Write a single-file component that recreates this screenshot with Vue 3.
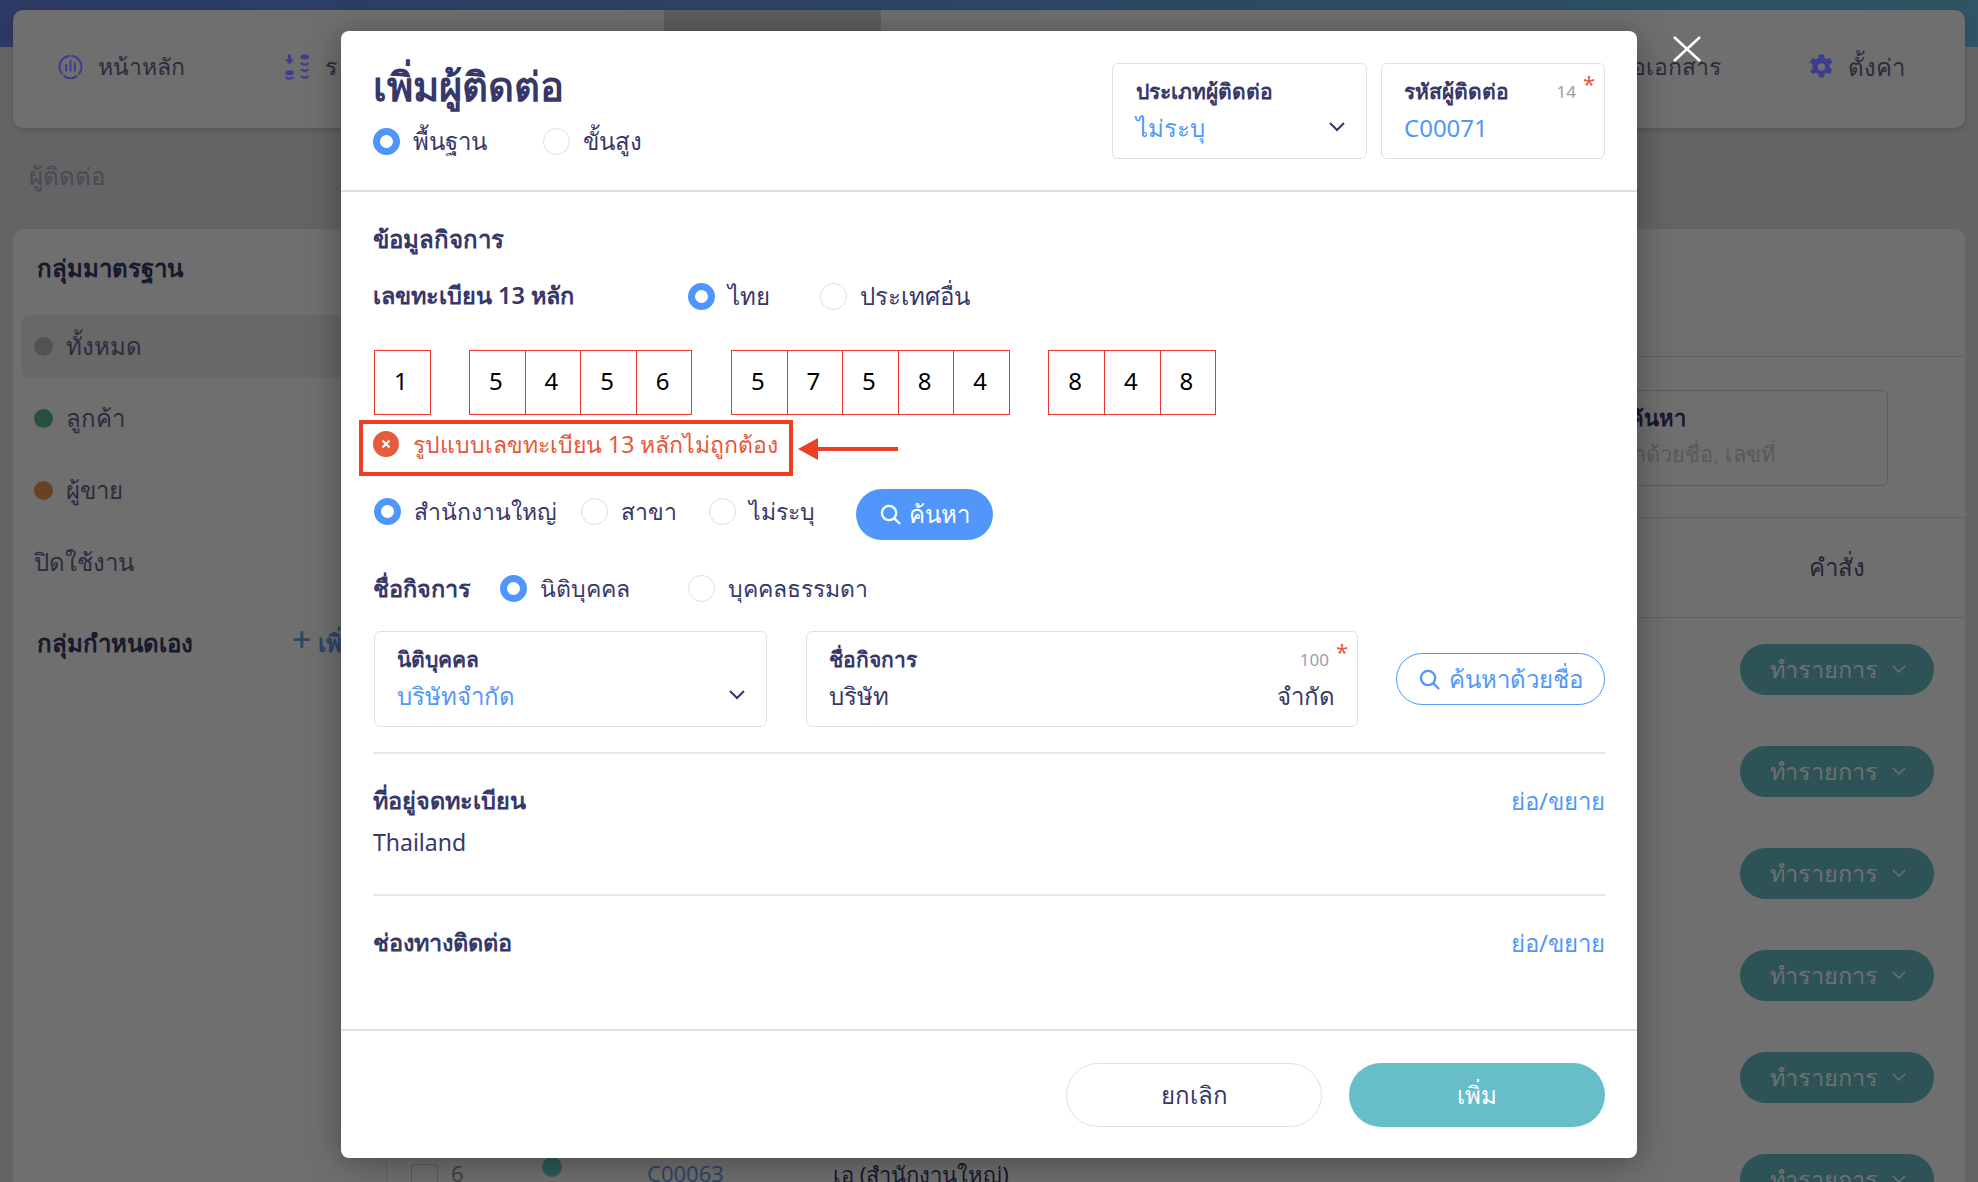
<script setup>
const navRight = 'ขอเอกสาร'

const sideItems = [
  { label: 'ทั้งหมด', color: '#bdbdbd', active: true },
  { label: 'ลูกค้า', color: '#5dbb8a' },
  { label: 'ผู้ขาย', color: '#ef9a4f' }
]

const taxGroups = [['1'], ['5', '4', '5', '6'], ['5', '7', '5', '8', '4'], ['8', '4', '8']]

const actionRows = [1, 2, 3, 4, 5, 6]

const branchOptions = [
  { label: 'สำนักงานใหญ่', checked: true, width: 207 },
  { label: 'สาขา', width: 128 },
  { label: 'ไม่ระบุ', width: 147 }
]
</script>

<template>
  <div class="page">
    <!-- page behind the dialog -->
    <div class="topband"></div>
    <div class="backdrop">
      <nav class="nav">
        <div class="nav-item first">
          <svg class="nav-icon" viewBox="0 0 26 26" fill="none" stroke="#3b3d8f" stroke-width="2" stroke-linecap="round">
            <path d="M11.500 1.600A11.500 11.500 0 0 0 4 20" />
            <path d="M14.500 1.600A11.500 11.500 0 0 1 22 20" />
            <path d="M6.500 22.500a11 11 0 0 0 13 0" />
            <path d="M8.500 11v6M13 6.500V17M17.500 9v8" />
          </svg>
          <span>หน้าหลัก</span>
        </div>
        <div class="nav-item second">
          <svg class="nav-icon" viewBox="0 0 26 26">
            <path fill="#3b3d8f" d="M3.200 0h3v5h3L4.700 10.500 0 5h3.200z" />
            <ellipse cx="4.700" cy="19" rx="4.500" ry="2.600" fill="#3b3d8f" />
            <ellipse cx="20.500" cy="2.600" rx="4.500" ry="2.600" fill="#3b3d8f" />
            <path d="M0.800 23.500q3.900 3 7.800 0M16.500 9q4 3 8 0M16.500 15.500q4 3 8 0M16.500 22.500q4 3 8 0" fill="none" stroke="#3b3d8f" stroke-width="2.300" />
          </svg>
          <span>ร</span>
        </div>
        <div class="nav-tab"></div>
        <div class="nav-spacer"></div>
        <div class="nav-item doc"><span>{{ navRight }}</span></div>
        <div class="nav-item setting">
          <svg class="nav-icon gear" viewBox="0 0 24 26">
            <path fill="#3b3d8f" fill-rule="evenodd" d="M9.500 0h5l.7 3.700 2.100 1.200 3.500-1.200 2.500 4.300-2.800 2.500v2.900l2.800 2.500-2.500 4.300-3.500-1.200-2.100 1.200-.7 3.800h-5l-.7-3.800-2.100-1.200-3.500 1.200L-.1 17.900l2.800-2.500v-4.800L-.1 8l2.500-4.300 3.500 1.200 2.900-1.200zM12 9a4 4 0 1 0 0 8 4 4 0 0 0 0-8z" />
          </svg>
          <span>ตั้งค่า</span>
        </div>
      </nav>

      <div class="crumb">ผู้ติดต่อ</div>

      <section class="content">
        <aside class="side">
          <h3 class="side-title">กลุ่มมาตรฐาน</h3>
          <div v-for="item in sideItems" :key="item.label" class="side-item" :class="{ active: item.active }">
            <i class="dot" :style="{ background: item.color }"></i>{{ item.label }}
          </div>
          <div class="side-item off">ปิดใช้งาน</div>
          <div class="side-own">
            <h3 class="side-title">กลุ่มกำหนดเอง</h3>
            <span class="side-add"><b>+</b> เพิ่ม</span>
          </div>
        </aside>

        <div class="main">
          <div class="main-top"></div>
          <div class="filter">
            <div class="search-box">
              <b>ค้นหา</b>
              <span>ค้นหาด้วยชื่อ, เลขที่</span>
            </div>
          </div>
          <div class="thead"><span>คำสั่ง</span></div>
          <div v-for="row in actionRows" :key="row" class="trow">
            <template v-if="row === 6">
              <i class="check"></i>
              <span class="num">6</span>
              <i class="row-dot"></i>
              <span class="code">C00063</span>
              <span class="cname">เอ (สำนักงานใหญ่)</span>
            </template>
            <button class="action">
              ทำรายการ
              <svg viewBox="0 0 14 8" fill="none" stroke="#fff" stroke-width="1.500"><path d="M1 1l6 6 6-6" /></svg>
            </button>
          </div>
        </div>
      </section>
    </div>

    <!-- dialog -->
    <div class="overlay">
      <svg class="close" viewBox="0 0 28 26" fill="none" stroke="#fff" stroke-width="2.600"><path d="M1 1l26 24M27 1L1 25" /></svg>

      <div class="modal">
        <header class="m-head">
          <div class="m-title-wrap">
            <h1 class="m-title">เพิ่มผู้ติดต่อ</h1>
            <div class="radios head-radios">
              <label class="radio w170 big"><i class="ring on"></i>พื้นฐาน</label>
              <label class="radio big"><i class="ring"></i>ขั้นสูง</label>
            </div>
          </div>
          <div class="field type-field">
            <div class="f-label">ประเภทผู้ติดต่อ</div>
            <div class="f-value blue">ไม่ระบุ</div>
            <svg class="chev" viewBox="0 0 16 10" fill="none" stroke="#37386a" stroke-width="2"><path d="M1 1l7 7 7-7" /></svg>
          </div>
          <div class="field code-field">
            <div class="f-label">รหัสผู้ติดต่อ</div>
            <div class="f-value blue">C00071</div>
            <span class="count">14</span>
            <span class="star">*</span>
          </div>
        </header>

        <div class="m-body">
          <h2 class="sec-title">ข้อมูลกิจการ</h2>

          <div class="tax-head">
            <h3 class="label-bold">เลขทะเบียน 13 หลัก</h3>
            <div class="radios">
              <label class="radio w132 big"><i class="ring on"></i>ไทย</label>
              <label class="radio big"><i class="ring"></i>ประเทศอื่น</label>
            </div>
          </div>

          <div class="tax-boxes">
            <div v-for="(group, g) in taxGroups" :key="g" class="tax-group">
              <div v-for="(digit, d) in group" :key="d" class="tax-cell">{{ digit }}</div>
            </div>
          </div>

          <div class="error">
            <svg class="err-icon" viewBox="0 0 26 26"><circle cx="13" cy="13" r="13" fill="#e45c3c" /><path d="M9.500 9.500l7 7M16.500 9.500l-7 7" stroke="#fff" stroke-width="2.200" /></svg>
            <span class="err-text">รูปแบบเลขทะเบียน 13 หลักไม่ถูกต้อง</span>
            <div class="err-frame"></div>
            <svg class="err-arrow" viewBox="0 0 100 22" fill="#ee3f23"><path d="M0 11L20 0v9h80v4H20v9z" /></svg>
          </div>

          <div class="branch-row">
            <label v-for="opt in branchOptions" :key="opt.label" class="radio" :style="{ width: opt.width + 'px' }">
              <i class="ring" :class="{ on: opt.checked }"></i>{{ opt.label }}
            </label>
            <button class="search-btn">
              <svg viewBox="0 0 22 22" fill="none" stroke="#fff" stroke-width="2.400"><circle cx="9.500" cy="9.500" r="7.500" /><path d="M15 15l6 6" /></svg>
              ค้นหา
            </button>
          </div>

          <div class="name-head">
            <h3 class="label-bold">ชื่อกิจการ</h3>
            <label class="radio w188"><i class="ring on"></i>นิติบุคคล</label>
            <label class="radio"><i class="ring"></i>บุคคลธรรมดา</label>
          </div>

          <div class="name-row">
            <div class="field legal-field">
              <div class="f-label">นิติบุคคล</div>
              <div class="f-value blue">บริษัทจำกัด</div>
              <svg class="chev" viewBox="0 0 16 10" fill="none" stroke="#37386a" stroke-width="2"><path d="M1 1l7 7 7-7" /></svg>
            </div>
            <div class="field name-field">
              <div class="f-label">ชื่อกิจการ</div>
              <div class="f-value split"><span>บริษัท</span><span>จำกัด</span></div>
              <span class="count">100</span>
              <span class="star">*</span>
            </div>
            <button class="name-search">
              <svg viewBox="0 0 22 22" fill="none" stroke="#5197fb" stroke-width="2.400"><circle cx="9.500" cy="9.500" r="7.500" /><path d="M15 15l6 6" /></svg>
              ค้นหาด้วยชื่อ
            </button>
          </div>

          <div class="block address">
            <div class="block-head">
              <h3 class="label-bold">ที่อยู่จดทะเบียน</h3>
              <a class="toggle">ย่อ/ขยาย</a>
            </div>
            <div class="block-text">Thailand</div>
          </div>

          <div class="block contact">
            <div class="block-head">
              <h3 class="label-bold">ช่องทางติดต่อ</h3>
              <a class="toggle">ย่อ/ขยาย</a>
            </div>
          </div>
        </div>

        <footer class="m-foot">
          <button class="btn ghost">ยกเลิก</button>
          <button class="btn primary">เพิ่ม</button>
        </footer>
      </div>
    </div>
  </div>
</template>

<style>
html, body { margin: 0; padding: 0; overflow: hidden; }
</style>

<style scoped>
* { box-sizing: border-box; }

.page {
  position: relative;
  width: 1978px;
  height: 1182px;
  overflow: hidden;
  background: #e6e6e6;
  font-family: "Noto Sans", Inter, "DejaVu Sans", sans-serif;
  color: #37386a;
}

.topband {
  height: 47px;
  background: linear-gradient(90deg, #6984e8, #6bc3e3);
}

.backdrop {
  margin-top: -37px;
  padding: 0 13px;
}

.nav {
  display: flex;
  align-items: flex-start;
  height: 118px;
  background: #fff;
  border-radius: 10px;
  box-shadow: 0 2px 6px rgba(0, 0, 0, .15);
  color: #666690;
  font-size: 23px;
}

.nav-item {
  display: flex;
  align-items: center;
  gap: 15px;
  height: 114px;
}

.nav-item.first { margin-left: 45px; width: 227px; }
.nav-item.second { width: 379px; }
.nav-tab { width: 217px; height: 118px; background: #dadada; }
.nav-spacer { flex: 1; }
.nav-item.setting { margin-left: 89px; margin-right: 60px; font-size: 24px; }

/* nav icons stay saturated above the dim layer */
.nav-icon { position: relative; z-index: 1; width: 25px; height: 26px; }
.gear { width: 23px; }

.crumb {
  margin: 29px 0 0 16px;
  height: 72px;
  font-size: 24px;
  color: #a9a9c4;
}

.content {
  display: flex;
  height: 960px;
  background: #fff;
  border-radius: 10px 10px 0 0;
}

.side {
  width: 373px;
  padding: 19px 8px 0 8px;
  flex: none;
}

.side-title {
  margin: 0;
  padding-left: 16px;
  font-size: 24px;
  line-height: 40px;
  font-weight: 600;
  color: #37386a;
}

.side-item {
  display: flex;
  align-items: center;
  gap: 13px;
  height: 63px;
  margin-top: 9px;
  padding-left: 13px;
  border-radius: 8px;
  font-size: 24px;
  color: #666690;
}

.side-item.active { margin-top: 27px; background: #efefef; }
.side-item.off { margin-top: 9px; }
.dot { width: 19px; height: 19px; border-radius: 50%; }

.side-own {
  display: flex;
  margin-top: 29px;
}

.side-own .side-title { width: 271px; }
.side-add { color: #6ba2f2; font-size: 24px; font-weight: 600; line-height: 40px; }
.side-add b { font-size: 34px; line-height: 30px; font-weight: 500; }

.main { flex: 1; position: relative; border-left: 1px solid #e4e4e4; }

.main-top { height: 128px; border-bottom: 1px solid #dcdcdc; }

.filter {
  display: flex;
  justify-content: flex-end;
  height: 161px;
  padding: 33px 77px 0 0;
  border-bottom: 1px solid #dcdcdc;
}

.search-box {
  width: 360px;
  height: 96px;
  padding: 8px 0 0 100px;
  border: 1px solid #d4d4d4;
  border-radius: 6px;
  font-size: 22px;
  line-height: 36px;
}

.search-box b { display: block; font-weight: 600; color: #37386a; }
.search-box span { display: inline-block; margin-left: -40px; color: #cccccc; }

.thead {
  display: flex;
  align-items: center;
  justify-content: flex-end;
  height: 100px;
  padding-right: 31px;
  border-bottom: 1px solid #dcdcdc;
  font-size: 24px;
  color: #555580;
}

.thead span { width: 194px; text-align: center; }

.trow {
  display: flex;
  align-items: center;
  justify-content: flex-end;
  position: relative;
  height: 102px;
  padding-right: 31px;
}

.action {
  display: flex;
  align-items: center;
  justify-content: center;
  gap: 14px;
  width: 194px;
  height: 51px;
  padding-right: 4px;
  border: 0;
  border-radius: 26px;
  background: #67bec8;
  color: #fff;
  font: inherit;
  font-size: 23.500px;
}

.action svg { width: 14px; height: 8px; }

.check { position: absolute; left: 24px; top: 36px; width: 27px; height: 27px; border: 1px solid #ccc; border-radius: 4px; }
.num { position: absolute; left: 64px; top: 30px; font-size: 22px; color: #999; }
.row-dot { position: absolute; left: 155px; top: 29px; width: 20px; height: 20px; border-radius: 50%; background: #60d0c0; }
.code { position: absolute; left: 260px; top: 30px; font-size: 22px; color: #6ba2f2; }
.cname { position: absolute; left: 446px; top: 30px; font-size: 22px; color: #37386a; }

/* dialog layer */
.overlay {
  position: absolute;
  inset: 0;
  background: rgba(0, 0, 0, .565);
}

.close {
  position: absolute;
  z-index: 2;
  left: 1673px;
  top: 36px;
  width: 28px;
  height: 26px;
}

.modal {
  position: absolute;
  z-index: 2;
  left: 341px;
  top: 31px;
  display: flex;
  flex-direction: column;
  width: 1296px;
  height: 1127px;
  background: #fff;
  border-radius: 8px;
  box-shadow: 0 4px 34px rgba(0, 0, 0, .35);
}

.m-head {
  display: flex;
  align-items: flex-start;
  height: 161px;
  padding: 32px 32px 0;
  border-bottom: 2px solid #dfdfec;
}

.m-title-wrap { flex: 1; margin-top: -2px; }

.m-title {
  margin: 0;
  font-size: 40px;
  line-height: 50px;
  font-weight: 600;
}

.head-radios { margin-top: 12px; }

.radios { display: flex; }

.radio {
  display: flex;
  align-items: center;
  gap: 13px;
  font-size: 23px;
  line-height: 36px;
}

.radio.big { font-size: 24px; }

.w132 { width: 132px; }
.w170 { width: 170px; }
.w188 { width: 188px; }

.ring {
  flex: none;
  width: 27px;
  height: 27px;
  border: 1px solid #dcdcea;
  border-radius: 50%;
}

.ring.on { border: 7px solid #4f96fb; }

.field {
  position: relative;
  height: 96px;
  padding: 9px 22px 0;
  border: 1.5px solid #dfdfec;
  border-radius: 6px;
}

.type-field { width: 255px; padding-left: 23px; }
.code-field { width: 224px; margin-left: 14px; }
.legal-field { width: 393px; }
.name-field { width: 552px; margin-left: 39px; }

.f-label {
  font-size: 21px;
  line-height: 36px;
  font-weight: 600;
}

.f-value {
  font-size: 24px;
  line-height: 38px;
}

.blue { color: #5197fb; }
.split { display: flex; justify-content: space-between; }

.chev { position: absolute; right: 21px; top: 58px; width: 16px; height: 10px; }

.count {
  position: absolute;
  right: 28px;
  top: 16px;
  font-size: 17px;
  color: #9c9cae;
}

.star {
  position: absolute;
  right: 9px;
  top: 6px;
  font-size: 22px;
  line-height: 26px;
  color: #e8593c;
}

.m-body {
  flex: 1;
  padding: 27px 32px 0;
}

.sec-title {
  margin: 0;
  font-size: 24px;
  line-height: 40px;
  font-weight: 600;
}

.label-bold {
  margin: 0;
  font-size: 23.500px;
  line-height: 40px;
  font-weight: 600;
}

.tax-head {
  display: flex;
  align-items: center;
  margin-top: 16px;
}

.tax-head .radios { margin: 2px 0 0 114px; }

.tax-boxes {
  display: flex;
  gap: 38.500px;
  margin: 35px 0 0 1px;
}

.tax-group { display: flex; }

.tax-cell {
  width: 56.600px;
  height: 65px;
  margin-left: -1px;
  padding-right: 3px;
  border: 1.5px solid #e8352a;
  text-align: center;
  font-size: 24px;
  line-height: 60px;
  color: #000;
}

.tax-cell:first-child { margin-left: 0; }

.error {
  position: relative;
  display: flex;
  align-items: center;
  gap: 14px;
  height: 44px;
  margin-top: 6px;
  padding-top: 2px;
  color: #e5583a;
  font-size: 23px;
}

.err-text { margin-top: 2px; }
.err-icon { width: 26px; height: 26px; flex: none; }

.err-frame {
  position: absolute;
  left: -14px;
  top: -1px;
  width: 434px;
  height: 56px;
  border: 4px solid #ee3f23;
}

.err-arrow {
  position: absolute;
  left: 425px;
  top: 17px;
  width: 100px;
  height: 22px;
}

.branch-row {
  display: flex;
  align-items: flex-start;
  margin: 24px 0 0 1px;
}

.branch-row .radio { height: 44px; }

.search-btn {
  display: flex;
  align-items: center;
  justify-content: center;
  gap: 8px;
  width: 137px;
  height: 51px;
  border: 0;
  border-radius: 26px;
  background: #5197fb;
  color: #fff;
  font: inherit;
  font-size: 24px;
}

.search-btn svg, .name-search svg { width: 21px; height: 21px; }

.name-head {
  display: flex;
  align-items: center;
  margin-top: 28px;
}

.name-head .label-bold { width: 127px; }

.name-row {
  display: flex;
  align-items: center;
  margin: 23px 0 0 1px;
}

.name-search {
  display: flex;
  align-items: center;
  justify-content: center;
  gap: 9px;
  width: 209px;
  height: 52px;
  margin-left: 38px;
  border: 1.5px solid #5197fb;
  border-radius: 26px;
  background: #fff;
  color: #5197fb;
  font: inherit;
  font-size: 24px;
}

.block {
  border-top: 2px solid #e8e8ee;
}

.address { height: 142px; margin-top: 25px; padding-top: 25px; }
.contact { padding-top: 25px; }

.block-head {
  display: flex;
  justify-content: space-between;
  align-items: center;
}

.toggle { margin-top: 3px; color: #5197fb; font-size: 24px; }

.block-text {
  margin-top: 3px;
  font-size: 23px;
  line-height: 36px;
}

.m-foot {
  display: flex;
  justify-content: flex-end;
  gap: 27px;
  height: 129px;
  padding: 32px 32px 0;
  border-top: 2px solid #dfdfec;
}

.btn {
  width: 256px;
  height: 64px;
  border-radius: 33px;
  font: inherit;
  font-size: 24px;
}

.ghost { border: 1.5px solid #dfdfec; background: #fff; color: #37386a; }
.primary { border: 0; background: #67bec8; color: #fff; }
</style>
